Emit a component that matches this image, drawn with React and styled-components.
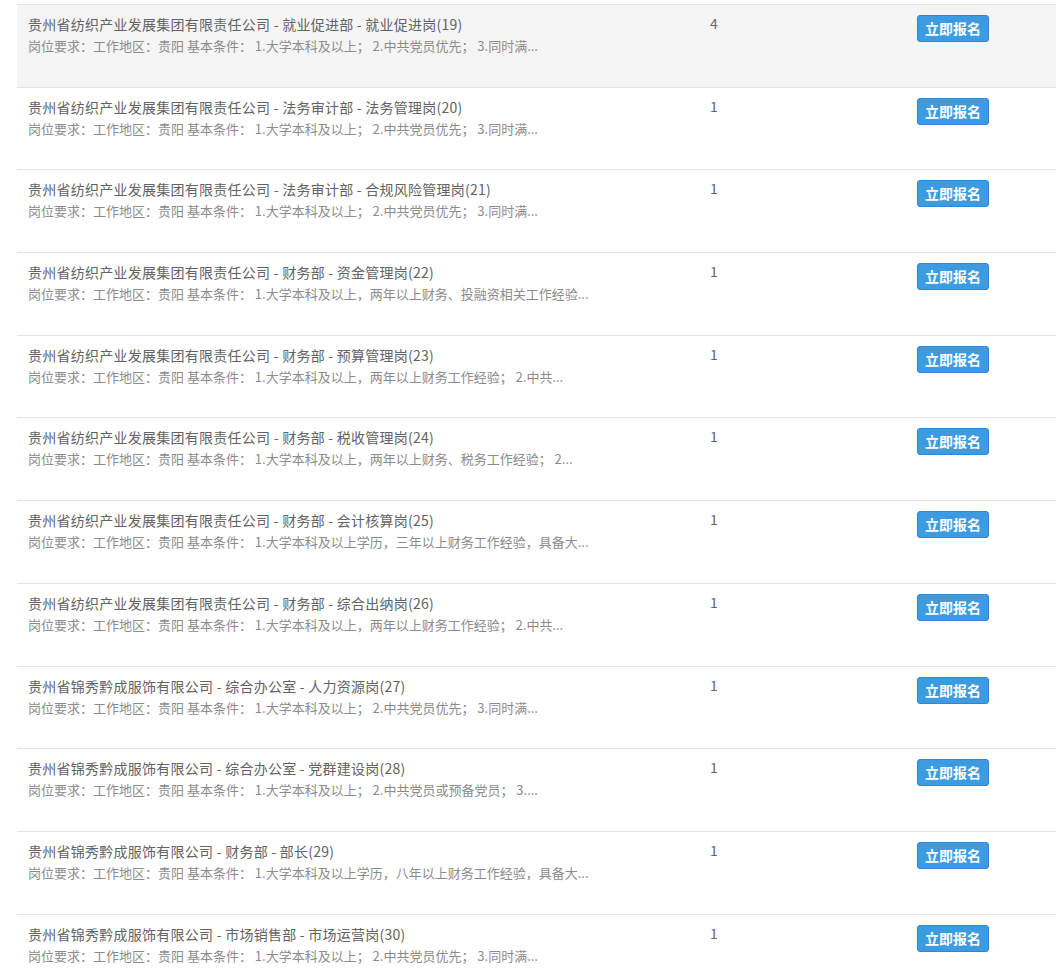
import React from "react";
import styled, { createGlobalStyle } from "styled-components";

const Global = createGlobalStyle`
  html, body { margin: 0; padding: 0; background: #fff; overflow: hidden; }
  body { font-family: "Noto Sans CJK SC", "Microsoft YaHei", sans-serif; }
`;

const Wrapper = styled.div`
  padding: 4px 0 0 17px;
`;

const Table = styled.table`
  width: 1060px;
  border-collapse: collapse;
  table-layout: fixed;
`;

const Row = styled.tr`
  background: ${(p) => (p.$active ? "#f5f5f5" : "#fff")};
  border-top: 1px solid #e4e4e4;
`;

const Cell = styled.td`
  vertical-align: top;
  padding: 8px 11px 0;
  height: 73.7px;
  box-sizing: content-box;
`;

const TitleCell = styled(Cell)`
  width: 661px;
`;

const CountCell = styled(Cell)`
  width: 185px;
  font-size: 14px;
  line-height: 21px;
  color: #666;
  padding-left: 10px;
`;

const ActionCell = styled(Cell)`
  padding-top: 10px;
  padding-left: 11px;
  height: 71.7px;
`;

const Title = styled.div`
  font-size: 14px;
  line-height: 22px;
  color: #636363;
  white-space: nowrap;
  letter-spacing: 0.25px;
`;

const Desc = styled.div`
  font-size: 13px;
  line-height: 22px;
  color: #8c8c8c;
  white-space: nowrap;
  letter-spacing: 0;
`;

const ApplyButton = styled.button`
  display: inline-block;
  width: 72px;
  height: 27px;
  padding: 0;
  border: 1px solid #2f87cf;
  border-radius: 3px;
  background: #3d9be2;
  color: #fff;
  font-family: "Noto Sans CJK SC", sans-serif;
  font-size: 14px;
  font-weight: 700;
  line-height: 25px;
  cursor: pointer;
`;

const A = "贵州省纺织产业发展集团有限责任公司";
const B = "贵州省锦秀黔成服饰有限公司";
const P = "岗位要求：工作地区：贵阳 基本条件： ";
const std = "1.大学本科及以上； 2.中共党员优先； 3.同时满...";

const rows = [
  [`${A} - 就业促进部 - 就业促进岗(19)`, std, 4],
  [`${A} - 法务审计部 - 法务管理岗(20)`, std, 1],
  [`${A} - 法务审计部 - 合规风险管理岗(21)`, std, 1],
  [`${A} - 财务部 - 资金管理岗(22)`, "1.大学本科及以上，两年以上财务、投融资相关工作经验...", 1],
  [`${A} - 财务部 - 预算管理岗(23)`, "1.大学本科及以上，两年以上财务工作经验； 2.中共...", 1],
  [`${A} - 财务部 - 税收管理岗(24)`, "1.大学本科及以上，两年以上财务、税务工作经验； 2...", 1],
  [`${A} - 财务部 - 会计核算岗(25)`, "1.大学本科及以上学历，三年以上财务工作经验，具备大...", 1],
  [`${A} - 财务部 - 综合出纳岗(26)`, "1.大学本科及以上，两年以上财务工作经验； 2.中共...", 1],
  [`${B} - 综合办公室 - 人力资源岗(27)`, std, 1],
  [`${B} - 综合办公室 - 党群建设岗(28)`, "1.大学本科及以上； 2.中共党员或预备党员； 3....", 1],
  [`${B} - 财务部 - 部长(29)`, "1.大学本科及以上学历，八年以上财务工作经验，具备大...", 1],
  [`${B} - 市场销售部 - 市场运营岗(30)`, std, 1],
];

export default function App() {
  return (
    <Wrapper>
      <Global />
      <Table>
        <tbody>
          {rows.map(([title, desc, count], i) => (
            <Row key={i} $active={i === 0}>
              <TitleCell>
                <Title>{title}</Title>
                <Desc>{P + desc}</Desc>
              </TitleCell>
              <CountCell>{count}</CountCell>
              <ActionCell>
                <ApplyButton>立即报名</ApplyButton>
              </ActionCell>
            </Row>
          ))}
        </tbody>
      </Table>
    </Wrapper>
  );
}
